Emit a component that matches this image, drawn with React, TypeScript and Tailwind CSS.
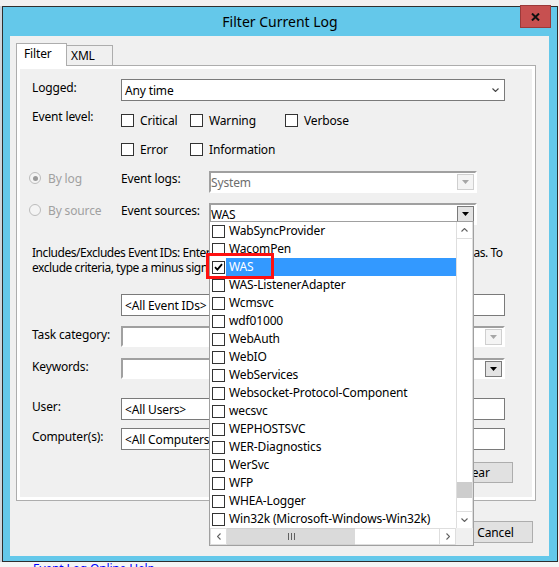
import React from 'react';

const SOURCES = [
  'WabSyncProvider',
  'WacomPen',
  'WAS',
  'WAS-ListenerAdapter',
  'Wcmsvc',
  'wdf01000',
  'WebAuth',
  'WebIO',
  'WebServices',
  'Websocket-Protocol-Component',
  'wecsvc',
  'WEPHOSTSVC',
  'WER-Diagnostics',
  'WerSvc',
  'WFP',
  'WHEA-Logger',
  'Win32k (Microsoft-Windows-Win32k)',
];

const CheckBox = ({ checked = false }: { checked?: boolean }) => (
  <span className="w-[13px] h-[13px] shrink-0 border border-[#333333] bg-white flex items-center justify-center">
    {checked && (
      <svg width="9" height="8" viewBox="0 0 9 8">
        <path d="M1 4.2 L3.4 6.6 L8 1.2" stroke="#000" strokeWidth="1.8" fill="none" />
      </svg>
    )}
  </span>
);

const Radio = ({ on = false }: { on?: boolean }) => (
  <span className="mt-[1px] w-[12px] h-[12px] shrink-0 rounded-full border border-[#bcbcbc] bg-[#f4f4f4] flex items-center justify-center">
    {on && <span className="w-[5px] h-[5px] rounded-full bg-[#9a9a9a]" />}
  </span>
);

const Tri = ({ color }: { color: string }) => (
  <svg width="7" height="4" viewBox="0 0 7 4">
    <path d="M0 0H7L3.5 4Z" fill={color} />
  </svg>
);

const Chevron = ({ dir, color = '#606060' }: { dir: 'up' | 'down' | 'left' | 'right'; color?: string }) => {
  const d = {
    down: 'M0.5 0.5 L3.5 3.5 L6.5 0.5',
    up: 'M0.5 3.5 L3.5 0.5 L6.5 3.5',
  };
  if (dir === 'left' || dir === 'right') {
    return (
      <svg width="4" height="7" viewBox="0 0 4 7">
        <path d={dir === 'left' ? 'M3.5 0.5 L0.5 3.5 L3.5 6.5' : 'M0.5 0.5 L3.5 3.5 L0.5 6.5'} stroke={color} strokeWidth="1.1" fill="none" />
      </svg>
    );
  }
  return (
    <svg width="7" height="4" viewBox="0 0 7 4">
      <path d={d[dir]} stroke={color} strokeWidth="1.1" fill="none" />
    </svg>
  );
};

// classic sunken combo with a small drop button
const SunkenCombo = ({
  width,
  height,
  text,
  textColor = '#000',
  active = false,
}: {
  width: string;
  height: string;
  text?: string;
  textColor?: string;
  active?: boolean;
}) => (
  <div
    className={`${width} ${height} bg-white border-2 border-t-[#a0a0a0] border-l-[#a0a0a0] border-r-white border-b-white flex items-center pr-[1px]`}
  >
    <span className="flex-1 leading-[15px]" style={{ color: textColor }}>
      {text}
    </span>
    {active ? (
      <div className="w-[17px] h-[16px] border border-[#7a7a7a] bg-[#e3e3e3] flex items-center justify-center">
        <Tri color="#000" />
      </div>
    ) : (
      <div className="w-[17px] h-[16px] border border-[#cfcfcf] bg-[#f4f4f4] flex items-center justify-center">
        <Tri color="#a6a6a6" />
      </div>
    )}
  </div>
);

const TextBox = ({ text }: { text?: string }) => (
  <div className="w-[384px] h-[22px] bg-white border border-[#7a7a7a] flex items-center pl-[3px] leading-[15px]">{text}</div>
);

const Label = ({ children }: { children: React.ReactNode }) => (
  <div className="w-[101px] pl-[12px] pt-[1px] leading-[15px]">{children}</div>
);

const Button = ({ children }: { children: React.ReactNode }) => (
  <div className="w-[75px] h-[22px] border border-[#adadad] bg-[#e1e1e1] flex items-center justify-center leading-[15px]">
    {children}
  </div>
);

const SourceList = () => (
  <div className="absolute left-[209px] top-[221px] w-[265px] h-[325px] border border-[#a0a0a0] bg-white flex flex-col">
    <div className="flex h-[306px]">
      <div className="w-[246px] flex flex-col">
        {SOURCES.map((s) => {
          const sel = s === 'WAS';
          return (
            <div key={s} className="h-[18px] flex items-center">
              <span className="ml-[2px] mr-[1px]">
                <CheckBox checked={sel} />
              </span>
              <span
                className={`flex-1 h-[18px] pl-[3px] leading-[18px] whitespace-nowrap ${
                  sel ? 'bg-[#3399ff] text-white' : ''
                }`}
              >
                {s}
              </span>
            </div>
          );
        })}
      </div>
      <div className="w-[17px] border-l border-r border-[#dedede] flex flex-col">
        <div className="h-[17px] border-b border-[#dedede] flex items-center justify-center">
          <Chevron dir="up" />
        </div>
        <div className="flex-1 flex flex-col">
          <div className="mt-auto mb-[13px] h-[16px] bg-[#cdcdcd]" />
        </div>
        <div className="h-[17px] border-t border-[#dedede] flex items-center justify-center">
          <Chevron dir="down" />
        </div>
      </div>
    </div>
    <div className="flex h-[17px]">
      <div className="w-[17px] border border-[#dedede] flex items-center justify-center">
        <Chevron dir="left" />
      </div>
      <div className="w-[128px] bg-[#dadada] border-y border-[#d0d0d0] flex items-center justify-center gap-[2px]">
        <span className="w-[1px] h-[7px] bg-[#606060]" />
        <span className="w-[1px] h-[7px] bg-[#606060]" />
        <span className="w-[1px] h-[7px] bg-[#606060]" />
      </div>
      <div className="w-[84px] border-y border-[#dedede]" />
      <div className="w-[17px] border border-[#dedede] flex items-center justify-center">
        <Chevron dir="right" />
      </div>
      <div className="flex-1 bg-[#f0f0f0]" />
    </div>
    {/* red annotation box */}
    <div className="absolute left-[-4px] top-[31px] w-[68px] h-[26px] border-[3px] border-[#ff1010]" />
  </div>
);

export default function App() {
  return (
    <div className="relative w-[559px] h-[567px] overflow-hidden bg-[#f0f0f0] flex flex-col text-[12px] tracking-[-0.15px] text-black font-['Noto_Sans',sans-serif]">
      <div className="h-[6px] shrink-0" />
      <div className="flex h-[556px] shrink-0">
        <div className="w-[2px] bg-[#cfd5dc]" />
        {/* dialog */}
        <div className="relative w-[556px] h-[556px] border border-[#2e2e2e] bg-[#64c8ea] flex flex-col">
          <div className="h-[29px] flex items-center justify-center text-[14px] tracking-normal leading-[18px]">Filter Current Log</div>
          <div className="absolute right-[6px] top-[-2px] w-[31px] h-[23px] bg-[#c75050] border border-[#9b3a3a] flex items-center justify-center">
            <svg width="9" height="8" viewBox="0 0 9 8">
              <path d="M1 0.5 L8 7.5 M8 0.5 L1 7.5" stroke="#111" strokeWidth="2" />
            </svg>
          </div>

          {/* client area */}
          <div className="ml-[7px] w-[539px] h-[520px] bg-[#f0f0f0] flex flex-col">
            {/* tabs */}
            <div className="mt-[7px] ml-[6px] flex items-end">
              <div className="relative z-10 w-[51px] h-[23px] mb-[-1px] bg-white border-l border-t border-r border-[#adadad] pl-[7px] pt-[2px] leading-[15px]">
                Filter
              </div>
              <div className="w-[46px] h-[20px] bg-[#f0f0f0] border-t border-r border-[#adadad] pl-[4px] pt-[2px] leading-[15px]">
                XML
              </div>
            </div>

            {/* tab panel */}
            <div className="ml-[6px] w-[520px] h-[436px] border border-[#adadad] bg-white p-[3px]">
              <div className="h-full bg-[#f0f0f0] flex flex-col">
                {/* Logged */}
                <div className="mt-[10px] h-[22px] flex">
                  <Label>Logged:</Label>
                  <div className="w-[384px] h-[22px] bg-white border border-[#7a7a7a] flex items-center pl-[3px] pr-[5px]">
                    <span className="flex-1 leading-[15px]">Any time</span>
                    <Chevron dir="down" color="#444" />
                  </div>
                </div>

                {/* Event level */}
                <div className="mt-[5px] flex">
                  <div className="w-[101px] pl-[12px] pt-[3px] leading-[15px]">Event level:</div>
                  <div className="grid grid-cols-[69px_95px_auto] auto-rows-[29px] items-center">
                    <div className="flex items-center gap-[6px]">
                      <CheckBox />
                      <span className="leading-[15px]">Critical</span>
                    </div>
                    <div className="flex items-center gap-[6px]">
                      <CheckBox />
                      <span className="leading-[15px]">Warning</span>
                    </div>
                    <div className="flex items-center gap-[6px]">
                      <CheckBox />
                      <span className="leading-[15px]">Verbose</span>
                    </div>
                    <div className="flex items-center gap-[6px]">
                      <CheckBox />
                      <span className="leading-[15px]">Error</span>
                    </div>
                    <div className="flex items-center gap-[6px]">
                      <CheckBox />
                      <span className="leading-[15px]">Information</span>
                    </div>
                  </div>
                </div>

                {/* By log */}
                <div className="mt-[7px] h-[22px] flex">
                  <div className="w-[101px] pl-[9px] flex items-start gap-[7px]">
                    <Radio on />
                    <span className="leading-[15px] text-[#a0a0a0]">By log</span>
                  </div>
                  <div className="w-[88px] leading-[15px]">Event logs:</div>
                  <SunkenCombo width="w-[268px]" height="h-[22px]" text="System" textColor="#6d6d6d" />
                </div>

                {/* By source */}
                <div className="mt-[10px] h-[22px] flex">
                  <div className="w-[101px] pl-[9px] flex items-start gap-[7px]">
                    <Radio />
                    <span className="leading-[15px] text-[#a0a0a0]">By source</span>
                  </div>
                  <div className="w-[88px] leading-[15px]">Event sources:</div>
                  <SunkenCombo width="w-[268px]" height="h-[22px]" text="WAS" active />
                </div>

                {/* help text */}
                <div className="mt-[20px] pl-[12px] leading-[15px] whitespace-nowrap tracking-[-0.45px]">
                  Includes/Excludes Event IDs: Enter ID numbers and/or ID ranges separated by commas. To
                  <br />
                  exclude criteria, type a minus sign first. For example 1,3,5-99,-76
                </div>

                <div className="mt-[19px] h-[22px] flex">
                  <div className="w-[101px]" />
                  <TextBox text="<All Event IDs>" />
                </div>

                <div className="mt-[10px] h-[21px] flex">
                  <Label>Task category:</Label>
                  <SunkenCombo width="w-[384px]" height="h-[21px]" />
                </div>

                <div className="mt-[11px] h-[21px] flex">
                  <Label>Keywords:</Label>
                  <SunkenCombo width="w-[384px]" height="h-[21px]" active />
                </div>

                <div className="mt-[19px] h-[22px] flex">
                  <Label>User:</Label>
                  <TextBox text="<All Users>" />
                </div>

                <div className="mt-[8px] h-[22px] flex">
                  <Label>Computer(s):</Label>
                  <TextBox text="<All Computers>" />
                </div>

                <div className="mt-[12px] mr-[19px] self-end w-[75px] h-[21px] border border-[#adadad] bg-[#e1e1e1] flex items-center justify-center leading-[15px]">
                  Clear
                </div>
              </div>
            </div>

            {/* dialog buttons */}
            <div className="mt-[20px] pr-[16px] flex justify-end gap-[6px]">
              <Button>OK</Button>
              <Button>Cancel</Button>
            </div>
          </div>
        </div>
      </div>
      <div className="h-[5px] shrink-0 bg-[#f5f5f5] pl-[33px] overflow-hidden">
        <div className="pt-[1px] leading-[12px] text-[#0000ff] whitespace-nowrap">Event Log Online Help</div>
      </div>

      <SourceList />
    </div>
  );
}
